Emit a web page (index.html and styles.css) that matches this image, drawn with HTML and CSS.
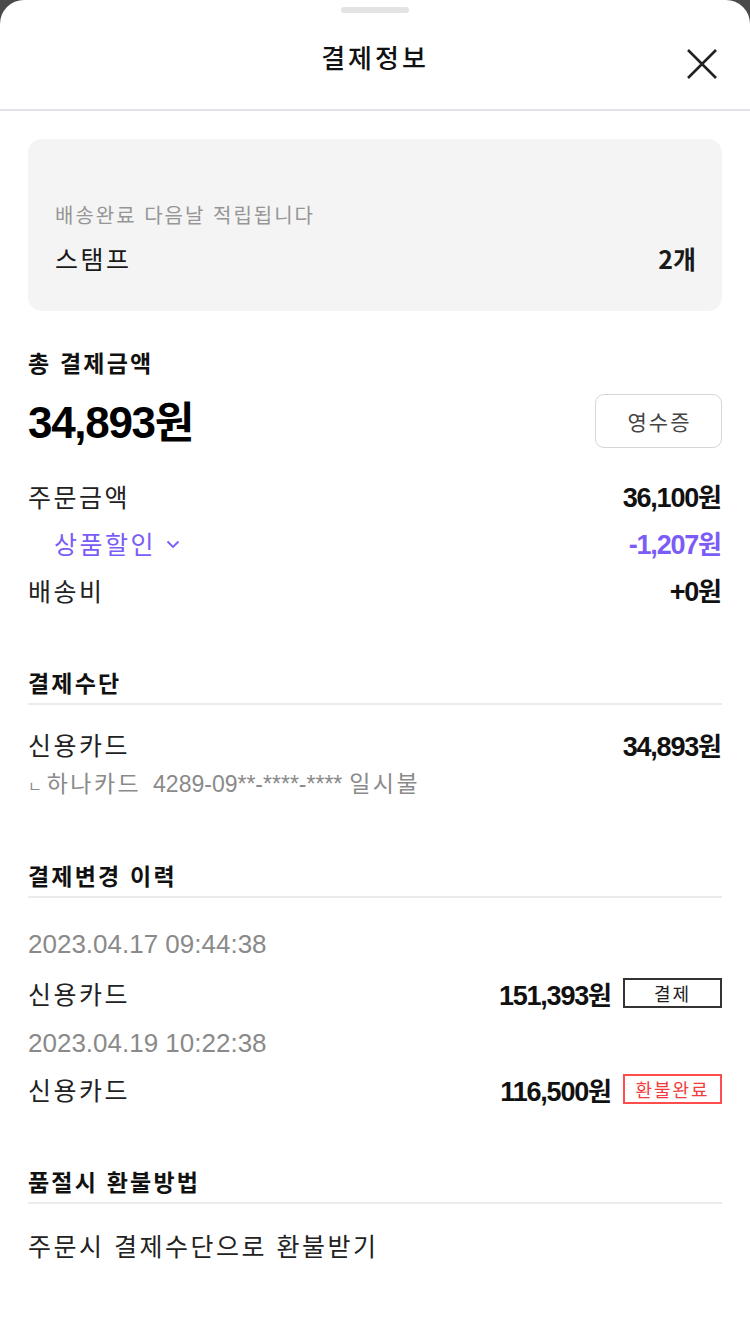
FILE: index.html
```html
<!DOCTYPE html>
<html lang="ko">
<head>
<meta charset="utf-8">
<title>결제정보</title>
<link rel="stylesheet" href="styles.css">
</head>
<body>
<div class="sheet">
  <div class="handle"></div>
  <header class="header">
    <h1 class="title">결제정보</h1>
    <button class="close" aria-label="닫기">
      <svg width="32" height="32" viewBox="0 0 32 32"><path d="M2 2 L30 30 M30 2 L2 30" stroke="#222" stroke-width="2.6" fill="none"/></svg>
    </button>
  </header>

  <main class="content">
    <section class="card">
      <p class="card-sub">배송완료 다음날 적립됩니다</p>
      <div class="card-row">
        <span class="card-label">스탬프</span>
        <span class="card-value">2개</span>
      </div>
    </section>

    <section class="total">
      <h2 class="sec-title plain">총 결제금액</h2>
      <div class="total-row">
        <span class="total-amount num">34,893<span class="won">원</span></span>
        <button class="receipt">영수증</button>
      </div>
      <div class="rows">
        <div class="row"><span class="label">주문금액</span><span class="amount num">36,100<span class="won">원</span></span></div>
        <div class="row discount"><span class="label">상품할인<svg class="chev" width="14" height="9" viewBox="0 0 14 9"><path d="M1.5 1.5 L7 7 L12.5 1.5" stroke="currentColor" stroke-width="1.8" fill="none"/></svg></span><span class="amount num">-1,207<span class="won">원</span></span></div>
        <div class="row"><span class="label">배송비</span><span class="amount num">+0<span class="won">원</span></span></div>
      </div>
    </section>

    <section class="method">
      <h2 class="sec-title">결제수단</h2>
      <div class="row pay"><span class="label">신용카드</span><span class="amount num">34,893<span class="won">원</span></span></div>
      <div class="pay-sub"><span class="corner">ㄴ</span>하나카드<span class="num-light">4289-09**-****-****</span>일시불</div>
    </section>

    <section class="history">
      <h2 class="sec-title">결제변경 이력</h2>
      <div class="hist">
        <div class="date date-1 num-light">2023.04.17 09:44:38</div>
        <div class="row hrow hrow-1"><span class="label">신용카드</span><span class="right"><span class="amount num">151,393<span class="won">원</span></span><span class="badge">결제</span></span></div>
        <div class="date date-2 num-light">2023.04.19 10:22:38</div>
        <div class="row hrow hrow-2"><span class="label">신용카드</span><span class="right"><span class="amount num">116,500<span class="won">원</span></span><span class="badge red">환불완료</span></span></div>
      </div>
    </section>

    <section class="refund">
      <h2 class="sec-title">품절시 환불방법</h2>
      <p class="refund-text">주문시 결제수단으로 환불받기</p>
    </section>
  </main>
</div>
</body>
</html>
```

FILE: styles.css
```css
* { box-sizing: border-box; }
html, body { margin: 0; padding: 0; }
body {
  background: #4a4a4a;
  font-family: "Noto Sans CJK KR", "Liberation Sans", sans-serif;
  color: #222;
}
.sheet {
  background: #fff;
  border-radius: 24px 24px 0 0;
  min-height: 1341px;
  overflow: hidden;
}
.handle {
  width: 68px;
  height: 6px;
  border-radius: 3px;
  background: #e3e3e3;
  margin: 7px auto 0;
}
.header {
  position: relative;
  height: 98px;
  border-bottom: 2px solid #e0e3e7;
  display: flex;
  align-items: center;
  justify-content: center;
}
.title {
  margin: 0;
  font-size: 26px;
  font-weight: 500;
  letter-spacing: 3px;
  line-height: 30px;
  color: #111;
  transform: translateY(-4px);
}
.close {
  position: absolute;
  right: 32px;
  top: 35px;
  width: 32px;
  height: 32px;
  padding: 0;
  border: 0;
  background: none;
}
.close svg { display: block; }
.content { padding: 0 28px; }

.card {
  margin-top: 28px;
  background: #f4f4f4;
  border-radius: 14px;
  padding: 60px 26px 22px 27px;
}
.card-sub {
  margin: 0;
  font-size: 20px;
  letter-spacing: 2px;
  line-height: 32px;
  color: #969696;
}
.card-row {
  display: flex;
  justify-content: space-between;
  align-items: center;
  height: 58px;
  padding-bottom: 4px;
}
.card-label { font-size: 25px; letter-spacing: 2.5px; color: #1a1a1a; }
.card-value { font-size: 25px; font-weight: 700; color: #1a1a1a; }

.num {
  font-family: "Liberation Sans", "Noto Sans CJK KR", sans-serif;
  font-weight: 700;
  font-size: 27px;
  letter-spacing: -1.2px;
}
.num .won { font-family: "Noto Sans CJK KR", sans-serif; font-weight: 700; letter-spacing: 0; }
.num-light {
  font-family: "Liberation Sans", sans-serif;
}

.sec-title {
  margin: 0;
  font-size: 23px;
  font-weight: 700;
  letter-spacing: 2.2px;
  line-height: 30px;
  color: #111;
  padding-bottom: 6px;
  border-bottom: 2px solid #ebebeb;
}
.sec-title.plain { border-bottom: 0; padding-bottom: 0; }

.total { margin-top: 36px; }
.total-row {
  display: flex;
  justify-content: space-between;
  align-items: center;
  margin-top: 15px;
}
.total-amount { font-size: 44px; letter-spacing: -1.3px; line-height: 54px; color: #000; }
.total-amount .won { font-size: 43px; }
.receipt {
  width: 127px;
  height: 54px;
  border: 1.5px solid #d6d6d6;
  border-radius: 9px;
  background: #fff;
  font-family: "Noto Sans CJK KR", sans-serif;
  font-size: 21px;
  letter-spacing: 2px;
  color: #444;
  padding: 0 0 0 2px;
}
.rows { margin-top: 22px; }
.row {
  display: flex;
  justify-content: space-between;
  align-items: center;
  height: 47px;
}
.label { font-size: 25px; letter-spacing: 2.5px; color: #222; display: inline-flex; align-items: center; }
.amount { color: #111; }
.amount .won { font-size: 26px; }
.discount .label { color: #7b5cf6; padding-left: 26px; }
.discount .amount { color: #7b5cf6; }
.chev { margin-left: 10px; margin-top: 3px; }

.method { margin-top: 54px; }
.pay { height: 40px; margin-top: 19px; }
.pay-sub {
  display: flex;
  align-items: baseline;
  font-size: 23px;
  letter-spacing: 2.4px;
  line-height: 36px;
  color: #8a8a8a;
}
.corner { font-size: 15px; letter-spacing: 0; margin-right: 5px; }
.pay-sub .num-light { font-size: 23px; letter-spacing: 0; margin: 0 7px 0 12px; }

.history { margin-top: 56px; }
.hist { margin-top: 22px; }
.date {
  display: flex;
  align-items: center;
  font-size: 26px;
  color: #8a8a8a;
}
.date-1 { height: 49px; }
.date-2 { height: 52px; }
.hrow-1 { height: 48px; }
.hrow-2 { height: 40px; }
.right { display: flex; align-items: center; gap: 11px; }
.badge {
  width: 99px;
  height: 30px;
  border: 2px solid #333;
  display: flex;
  align-items: center;
  justify-content: center;
  font-size: 18px;
  letter-spacing: 2px;
  color: #222;
}
.badge.red { border-color: #ff4d4d; color: #f23b3b; }

.refund { margin-top: 57px; }
.refund-text {
  margin: 21px 0 0;
  font-size: 25px;
  letter-spacing: 2.5px;
  line-height: 40px;
  color: #222;
}
```
